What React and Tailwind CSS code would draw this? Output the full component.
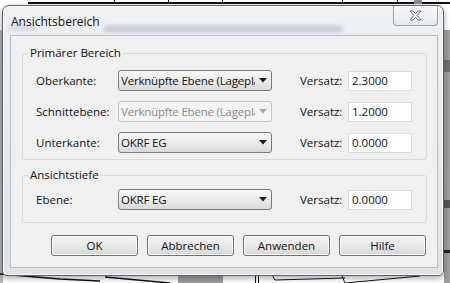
import React from "react";

const font = { fontFamily: '"Open Sans", "Noto Sans", sans-serif' };

function Arrow({ disabled }) {
  return (
    <svg width="8" height="5" viewBox="0 0 8 5" className="shrink-0">
      <path d="M0 0 L8 0 L4 4.5 Z" fill={disabled ? "#a8a8a8" : "#1a1a1a"} />
    </svg>
  );
}

function Select({ value, disabled }) {
  return (
    <div
      className={
        "flex h-[21px] w-[154px] items-center rounded-[3px] border pl-[2px] pr-[4px] " +
        (disabled
          ? "border-[#c2c4c6] bg-[#f4f4f4] text-[#8a8a8a]"
          : "border-[#7a7a7a] bg-linear-to-b from-[#f8f8f8] via-[#ececec] to-[#d9d9d9] text-[#111]")
      }
    >
      <div className="mr-[4px] min-w-0 flex-1 overflow-hidden whitespace-nowrap leading-[19px] tracking-[-0.2px]">{value}</div>
      <Arrow disabled={disabled} />
    </div>
  );
}

function Row({ label, value, offset, disabled }) {
  return (
    <div className="flex h-[21px] items-center">
      <div className="w-[82px] leading-[16px]">{label}</div>
      <Select value={value} disabled={disabled} />
      <div className="ml-[28px] w-[48px] leading-[16px]">Versatz:</div>
      <div className="h-[20px] w-[64px] border border-[#dadada] bg-white pl-[3px] leading-[18px] text-[#111]">
        {offset}
      </div>
    </div>
  );
}

function Group({ title, children, className }) {
  return (
    <div className={"relative w-[405px] rounded-[3px] border border-[#d3dbe1] " + className}>
      <div className="absolute left-[5px] top-[-9px] bg-[#f0f0f0] px-[2px] leading-[16px]">{title}</div>
      {children}
    </div>
  );
}

function Button({ children }) {
  return (
    <div className="flex h-[21px] w-[87px] items-center justify-center rounded-[3px] border border-[#707070] bg-linear-to-b from-[#f4f4f4] via-[#e9e9e9] to-[#d6d6d6] shadow-[inset_0_0_0_1px_#fbfbfb] leading-[16px] text-[#111]">
      {children}
    </div>
  );
}

function Background() {
  return (
    <svg className="absolute inset-0" width="450" height="283" viewBox="0 0 450 283">
      <rect x="0" y="0" width="450" height="283" fill="#ffffff" />
      <rect x="28" y="2" width="422" height="2" fill="#111" />
      {[114, 168, 222, 342, 397].map((x) => (
        <rect key={x} x={x} y="0" width="1" height="3" fill="#111" />
      ))}
      <rect x="414" y="0" width="8" height="4" fill="#8a8a8a" />
      <rect x="0" y="30" width="3" height="253" fill="#b4b4b4" />
      <rect x="444" y="30" width="6" height="253" fill="#9d9f9d" />
      <rect x="444" y="60" width="6" height="12" fill="#6f716f" />
      <rect x="444" y="200" width="6" height="8" fill="#555" />
      <rect x="444" y="250" width="6" height="3" fill="#222" />
      <path d="M0 274 L60 279 L100 281" stroke="#111" strokeWidth="1.5" fill="none" />
      <path d="M105 277 L170 283" stroke="#111" strokeWidth="1.5" fill="none" />
      <rect x="178" y="272" width="45" height="11" fill="#9e9e9e" />
      <rect x="255" y="273" width="1" height="10" fill="#111" />
      <rect x="258" y="273" width="1" height="10" fill="#111" />
      <path d="M272 275 L275 280 L345 278" stroke="#111" strokeWidth="1" fill="none" />
      <path d="M342 276 L345 283" stroke="#111" strokeWidth="1" fill="none" />
      <path d="M345 283 L420 276" stroke="#111" strokeWidth="1" fill="none" />
    </svg>
  );
}

export default function App() {
  return (
    <div className="relative h-[283px] w-[450px] overflow-hidden bg-white text-[11.5px] text-[#111]" style={font}>
      <Background />
      <div className="relative ml-[2px] mt-[5px] h-[271px] w-[442px] rounded-t-[7px] rounded-b-[5px] border border-[#5d646c] bg-linear-to-b from-[#eef1f4] to-[#dfe3e7] shadow-[0_2px_6px_rgba(0,0,0,0.35),inset_0_0_0_1px_rgba(255,255,255,0.75)]">
        <div className="pointer-events-none absolute left-[100px] top-[20px] h-[6px] w-[240px] rounded-full bg-[#b3b7ba] opacity-70 blur-[2px]" />
        <div className="pointer-events-none absolute left-[4px] top-[20px] h-[4px] w-[30px] rounded-full bg-[#c5c8ca] opacity-70 blur-[2px]" />
        <div className="relative h-[29px] pl-[8px] pt-[6px] leading-[20px] text-[12px] text-[#111]">Ansichtsbereich</div>
        <div className="absolute right-[5px] top-0 flex h-[20px] w-[45px] items-center justify-center rounded-b-[4px] border border-t-0 border-[#9aa1a8] bg-linear-to-b from-[#f6f8fa]/90 to-[#e6eaee]/90">
          <svg width="13" height="11" viewBox="0 0 13 11">
            <path
              d="M1 1 L4 1 L6.5 3.6 L9 1 L12 1 L8.2 5.5 L12 10 L9 10 L6.5 7.4 L4 10 L1 10 L4.8 5.5 Z"
              fill="#ffffff"
              stroke="#6b7076"
              strokeWidth="1"
              strokeLinejoin="round"
            />
          </svg>
        </div>
        <div className="ml-[7px] h-[233px] w-[428px] border border-[#b7bfc6] bg-[#f0f0f0] pl-[11px] pt-[17px]">
          <Group title="Primärer Bereich" className="h-[107px]">
            <div className="flex flex-col gap-[10px] pl-[13px] pt-[16px]">
              <Row label="Oberkante:" value="Verknüpfte Ebene (Lageplan)" offset="2.3000" />
              <Row label="Schnittebene:" value="Verknüpfte Ebene (Lageplan)" offset="1.2000" disabled />
              <Row label="Unterkante:" value="OKRF EG" offset="0.0000" />
            </div>
          </Group>
          <Group title="Ansichtstiefe" className="mt-[15px] h-[48px]">
            <div className="pl-[13px] pt-[13px]">
              <Row label="Ebene:" value="OKRF EG" offset="0.0000" />
            </div>
          </Group>
          <div className="mt-[12px] flex gap-[9px] pl-[29px]">
            <Button>OK</Button>
            <Button>Abbrechen</Button>
            <Button>Anwenden</Button>
            <Button>Hilfe</Button>
          </div>
        </div>
      </div>
    </div>
  );
}
